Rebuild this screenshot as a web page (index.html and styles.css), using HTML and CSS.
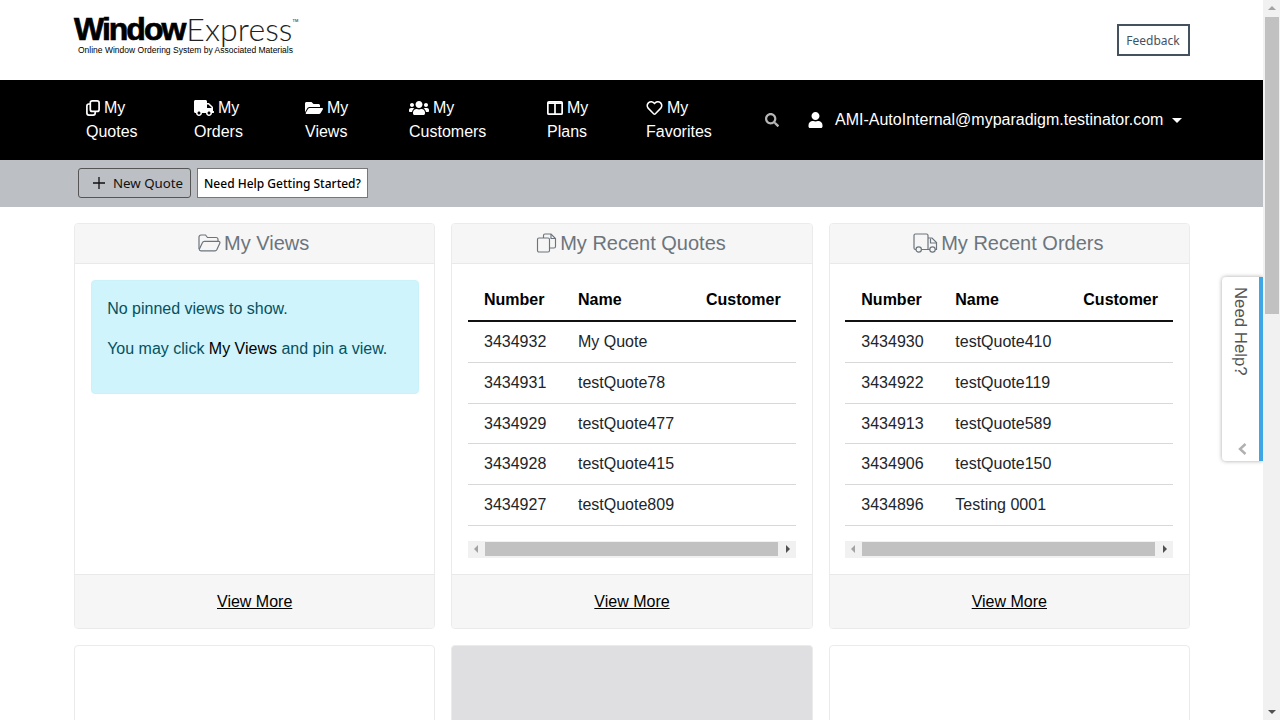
FILE: index.html
```html
<!DOCTYPE html>
<html lang="en">
<head>
    <meta charset="UTF-8">
    <title>WindowExpress</title>
    <link rel="stylesheet" href="styles.css">
</head>
<body>
<div class="app">
    <div class="page">
        <header class="top">
            <div class="wrap top-row">
                <a class="logo">
                    <span class="logo-name"><b>Window</b><span class="logo-thin">Express</span><sup>TM</sup></span>
                    <span class="logo-sub">Online Window Ordering System by Associated Materials</span>
                </a>
                <button class="feedback">Feedback</button>
            </div>
        </header>

        <nav class="nav">
            <div class="wrap nav-row">
                <div class="nav-links">
                    <a class="nav-link">
                        <span class="nav-first">
                            <svg class="ico" width="14" height="16" viewBox="0 0 14 16" fill="none" stroke="#fff" stroke-width="1.7"><rect x="4.300" y="0.900" width="8.800" height="10.500" rx="2"/><path d="M4.300 4H2.900A2 2 0 0 0 .9 6v7.100a2 2 0 0 0 2 2h4.300a2 2 0 0 0 2-2v-1.700"/></svg>
                            My
                        </span>
                        Quotes
                    </a>
                    <a class="nav-link">
                        <span class="nav-first">
                            <svg class="ico" width="20" height="16" viewBox="0 0 640 512" fill="#fff"><path d="M624 352h-16V243.900c0-12.700-5.100-24.900-14.100-33.900L494 110.100c-9-9-21.200-14.100-33.900-14.100H416V48c0-26.500-21.500-48-48-48H48C21.500 0 0 21.500 0 48v320c0 26.500 21.500 48 48 48h16c0 53 43 96 96 96s96-43 96-96h128c0 53 43 96 96 96s96-43 96-96h48c8.800 0 16-7.200 16-16v-32c0-8.800-7.200-16-16-16zM160 464c-26.500 0-48-21.500-48-48s21.500-48 48-48 48 21.500 48 48-21.500 48-48 48zm320 0c-26.500 0-48-21.500-48-48s21.500-48 48-48 48 21.500 48 48-21.500 48-48 48zm80-208H416V144h44.100l99.900 99.900V256z"/></svg>
                            My
                        </span>
                        Orders
                    </a>
                    <a class="nav-link">
                        <span class="nav-first">
                            <svg class="ico" width="18" height="16" viewBox="0 0 576 512" fill="#fff"><path d="M572.694 292.093L500.27 416.248A63.997 63.997 0 0 1 444.989 448H45.025c-18.523 0-30.064-20.093-20.731-36.093l72.424-124.155A64 64 0 0 1 152 256h399.964c18.523 0 30.064 20.093 20.73 36.093zM152 224h328v-48c0-26.51-21.49-48-48-48H272l-64-64H48C21.49 64 0 85.49 0 112v278.046l69.077-118.418C86.214 242.25 117.989 224 152 224z"/></svg>
                            My
                        </span>
                        Views
                    </a>
                    <a class="nav-link">
                        <span class="nav-first">
                            <svg class="ico" width="20" height="16" viewBox="0 0 640 512" fill="#fff"><path d="M96 224c35.300 0 64-28.700 64-64s-28.700-64-64-64-64 28.700-64 64 28.700 64 64 64zm448 0c35.300 0 64-28.700 64-64s-28.700-64-64-64-64 28.700-64 64 28.700 64 64 64zm32 32h-64c-17.600 0-33.500 7.100-45.100 18.600 40.300 22.100 68.900 62 75.100 109.400h66c17.700 0 32-14.300 32-32v-32c0-35.300-28.700-64-64-64zm-256 0c61.900 0 112-50.100 112-112S381.900 32 320 32 208 82.100 208 144s50.100 112 112 112zm76.800 32h-8.300c-20.800 10-43.900 16-68.500 16s-47.600-6-68.500-16h-8.300C179.600 288 128 339.600 128 403.200V432c0 26.500 21.500 48 48 48h288c26.500 0 48-21.500 48-48v-28.800c0-63.600-51.600-115.200-115.200-115.200zm-223.700-13.400C161.500 263.100 145.600 256 128 256H64c-35.300 0-64 28.700-64 64v32c0 17.700 14.300 32 32 32h65.900c6.300-47.400 34.900-87.300 75.200-109.400z"/></svg>
                            My
                        </span>
                        Customers
                    </a>
                    <a class="nav-link">
                        <span class="nav-first">
                            <svg class="ico" width="16" height="14" viewBox="0 0 16 14" fill="none" stroke="#fff" stroke-width="1.700"><rect x="0.850" y="0.850" width="14.300" height="12.300" rx="1"/><path d="M8 1v12M1 2.200h14"/></svg>
                            My
                        </span>
                        Plans
                    </a>
                    <a class="nav-link">
                        <span class="nav-first">
                            <svg class="ico" width="17" height="16" viewBox="0 0 512 512" fill="#fff"><path d="M458.400 64.300C400.600 15.700 311.300 23 256 79.300 200.700 23 111.400 15.600 53.600 64.300-21.600 127.600-10.600 230.800 43 285.500l175.400 178.700c10 10.200 23.400 15.900 37.600 15.900 14.300 0 27.600-5.600 37.600-15.800L469 285.600c53.500-54.700 64.700-157.900-10.600-221.300zm-23.600 187.500L259.400 430.500c-2.400 2.400-4.400 2.400-6.800 0L77.200 251.800c-36.500-37.200-43.900-107.600 7.300-150.700 38.900-32.700 98.900-27.800 136.500 10.500l35 35.700 35-35.700c37.800-38.500 97.800-43.200 136.500-10.600 51.100 43.100 43.500 113.900 7.300 150.800z"/></svg>
                            My
                        </span>
                        Favorites
                    </a>
                </div>
                <svg class="nav-search" width="14" height="14" viewBox="0 0 512 512" fill="#b5b5b5"><path d="M505 442.700L405.300 343c-4.500-4.500-10.600-7-17-7H372c27.600-35.300 44-79.700 44-128C416 93.100 322.900 0 208 0S0 93.100 0 208s93.100 208 208 208c48.300 0 92.700-16.400 128-44v16.300c0 6.400 2.500 12.500 7 17l99.700 99.700c9.400 9.400 24.600 9.400 33.900 0l28.300-28.300c9.400-9.400 9.400-24.600.1-34zM208 336c-70.700 0-128-57.200-128-128 0-70.700 57.200-128 128-128 70.700 0 128 57.200 128 128 0 70.700-57.200 128-128 128z"/></svg>
                <a class="nav-user">
                    <svg width="15" height="16" viewBox="0 0 448 512" fill="#fff"><path d="M224 256c70.700 0 128-57.300 128-128S294.700 0 224 0 96 57.300 96 128s57.300 128 128 128zm89.600 32h-16.700c-22.200 10.200-46.900 16-72.900 16s-50.600-5.800-72.900-16h-16.700C60.200 288 0 348.200 0 422.400V464c0 26.500 21.500 48 48 48h352c26.500 0 48-21.500 48-48v-41.600c0-74.200-60.200-134.400-134.400-134.400z"/></svg>
                    <span>AMI-AutoInternal@myparadigm.testinator.com</span>
                    <i class="caret"></i>
                </a>
            </div>
        </nav>

        <div class="toolbar">
            <div class="wrap toolbar-row">
                <button class="btn-new">
                    <svg width="12" height="12" viewBox="0 0 12 12" stroke="#111" stroke-width="1.300"><path d="M6 0v12M0 6h12"/></svg>
                    New Quote
                </button>
                <button class="btn-help">Need Help Getting Started?</button>
            </div>
        </div>

        <main class="wrap cards">
            <section class="card">
                <div class="card-head">
                    <svg width="23" height="18" viewBox="0 0 23 18" fill="none" stroke="#6c757d" stroke-width="1.200"><path d="M1 15V3a2 2 0 0 1 2-2h4.500l2 2.500H18a2 2 0 0 1 2 2V7"/><path d="M1.200 15.500 4.500 8.500A2 2 0 0 1 6.300 7.300H20.600a1.300 1.300 0 0 1 1.200 1.900l-3 6.500a2 2 0 0 1-1.800 1.100H3a1.900 1.900 0 0 1-1.800-1.800z"/></svg>
                    My Views
                </div>
                <div class="card-body">
                    <div class="alert">
                        <p>No pinned views to show.</p>
                        <p>You may click <a>My Views</a> and pin a view.</p>
                    </div>
                </div>
                <div class="card-foot"><a>View More</a></div>
            </section>

            <section class="card">
                <div class="card-head">
                    <svg width="21" height="20" viewBox="0 0 20 20" fill="none" stroke="#6c757d" stroke-width="1.150"><path d="M7 5V2.500A1.500 1.500 0 0 1 8.500 1h6L19 5.500v8a1.500 1.500 0 0 1-1.500 1.500H13"/><path d="M14.500 1v4.500H19"/><rect x="1" y="5" width="12" height="14" rx="1.500"/></svg>
                    My Recent Quotes
                </div>
                <div class="card-body">
                    <div class="table-scroll">
                        <table class="grid-table">
                            <thead><tr><th>Number</th><th>Name</th><th>Customer</th></tr></thead>
                            <tbody>
                                <tr><td>3434932</td><td>My Quote</td><td></td></tr>
                                <tr><td>3434931</td><td>testQuote78</td><td></td></tr>
                                <tr><td>3434929</td><td>testQuote477</td><td></td></tr>
                                <tr><td>3434928</td><td>testQuote415</td><td></td></tr>
                                <tr><td>3434927</td><td>testQuote809</td><td></td></tr>
                            </tbody>
                        </table>
                    </div>
                    <div class="hbar"><i class="arrow-left"></i><span class="hbar-thumb"></span><i class="arrow-right"></i></div>
                </div>
                <div class="card-foot"><a>View More</a></div>
            </section>

            <section class="card">
                <div class="card-head">
                    <svg width="25" height="20" viewBox="0 0 25 20" fill="none" stroke="#6c757d" stroke-width="1.200"><path d="M3 16.500H2.500A1.500 1.500 0 0 1 1 15V2.500A1.500 1.500 0 0 1 2.500 1h11A1.500 1.500 0 0 1 15 2.500V16.500H8.500"/><path d="M15 5h4l4.500 4.500V16.500H22M15 16.500h2"/><path d="M17.500 5.500V10h6"/><circle cx="5.700" cy="16.500" r="2.700"/><circle cx="19.500" cy="16.500" r="2.700"/></svg>
                    My Recent Orders
                </div>
                <div class="card-body">
                    <div class="table-scroll">
                        <table class="grid-table">
                            <thead><tr><th>Number</th><th>Name</th><th>Customer</th></tr></thead>
                            <tbody>
                                <tr><td>3434930</td><td>testQuote410</td><td></td></tr>
                                <tr><td>3434922</td><td>testQuote119</td><td></td></tr>
                                <tr><td>3434913</td><td>testQuote589</td><td></td></tr>
                                <tr><td>3434906</td><td>testQuote150</td><td></td></tr>
                                <tr><td>3434896</td><td>Testing 0001</td><td></td></tr>
                            </tbody>
                        </table>
                    </div>
                    <div class="hbar"><i class="arrow-left"></i><span class="hbar-thumb"></span><i class="arrow-right"></i></div>
                </div>
                <div class="card-foot"><a>View More</a></div>
            </section>

            <section class="card card-empty"></section>
            <section class="card card-empty card-gray"></section>
            <section class="card card-empty"></section>
        </main>

        <aside class="help-tab">
            <span class="help-label">Need Help?</span>
            <svg class="help-chevron" width="9" height="12" viewBox="0 0 9 12" fill="none" stroke="#b0b0b0" stroke-width="2.400"><path d="M7.500 1 2 6l5.500 5"/></svg>
        </aside>
    </div>

    <div class="vbar">
        <i class="arrow-up"></i>
        <span class="vbar-thumb"></span>
        <i class="arrow-down"></i>
    </div>
</div>
</body>
</html>
```

FILE: styles.css
```css
* {
    box-sizing: border-box;
}

html, body {
    margin: 0;
    height: 100%;
    overflow: hidden;
}

body {
    font-family: "Liberation Sans", Arial, sans-serif;
    font-size: 16px;
    line-height: 24px;
    color: #212529;
    background-color: #fff;
}

.app {
    display: flex;
    height: 720px;
}

.page {
    position: relative;
    flex: 1;
    min-width: 0;
    overflow: hidden;
}

.wrap {
    width: 1116px;
    margin-left: 74px;
}

/* header */
.top {
    height: 80px;
}

.top-row {
    display: flex;
    justify-content: space-between;
    align-items: flex-start;
}

.logo {
    display: flex;
    flex-direction: column;
    padding-top: 13px;
    color: #000;
}

.logo-name {
    font-size: 32px;
    line-height: 32px;
    white-space: nowrap;
    display: flex;
    align-items: flex-start;
}

.logo-name b {
    letter-spacing: -2px;
    -webkit-text-stroke: 0.7px #000;
}

.logo-thin {
    font-family: Lato, sans-serif;
    font-weight: 300;
    letter-spacing: 0.1px;
    margin-left: 2px;
    color: #222;
}

.logo-name sup {
    font-size: 4px;
    line-height: 4px;
    margin: 6px 0 0 0;
}

.logo-sub {
    font-size: 8.500px;
    line-height: 10px;
    margin: 0 0 0 4px;
    white-space: nowrap;
}

.feedback {
    margin-top: 24px;
    width: 73px;
    height: 32px;
    padding: 0 1px 0 0;
    font-family: "Noto Sans", sans-serif;
    font-size: 12px;
    color: #44525f;
    background-color: #fff;
    border: 2px solid #44525f;
}

/* nav */
.nav {
    height: 80px;
    background-color: #000;
    color: #fff;
}

.nav-row {
    display: flex;
    align-items: center;
    height: 80px;
    padding-left: 12px;
}

.nav-links {
    display: grid;
    grid-template-columns: 108px 111px 104px 138px 99px 119px;
}

.nav-link {
    display: block;
}

.nav-first {
    display: flex;
    align-items: center;
    gap: 4px;
}

.nav-user {
    display: flex;
    align-items: center;
    margin-left: 29px;
}

.nav-user span {
    margin-left: 12px;
    white-space: nowrap;
}

.caret {
    width: 0;
    height: 0;
    margin-left: 9px;
    border-left: 5px solid transparent;
    border-right: 5px solid transparent;
    border-top: 5px solid #fff;
}

/* toolbar */
.toolbar {
    height: 47px;
    background-color: #bcbfc4;
}

.toolbar-row {
    display: flex;
    gap: 6px;
    padding: 8px 0 0 4px;
}

.btn-new, .btn-help {
    height: 30px;
    padding: 0;
    font-family: "Noto Sans", sans-serif;
}

.btn-new {
    display: flex;
    align-items: center;
    justify-content: center;
    gap: 8px;
    width: 113px;
    padding-left: 7px;
    font-size: 13.300px;
    color: #111;
    background-color: #bcbfc4;
    border: 1px solid #555;
    border-radius: 3px;
}

.btn-help {
    width: 171px;
    font-size: 12px;
    font-weight: 500;
    color: #000;
    background-color: #fff;
    border: 1px solid #777;
}

/* cards */
.cards {
    display: grid;
    grid-template-columns: repeat(3, 1fr);
    gap: 16px;
    padding-top: 16px;
}

.card {
    display: flex;
    flex-direction: column;
    border: 1px solid #ebebeb;
    border-radius: 4px;
    overflow: hidden;
}

.card-head {
    display: flex;
    justify-content: center;
    align-items: center;
    gap: 3px;
    height: 40px;
    padding: 0 2px 2px 0;
    font-size: 20px;
    color: #6c757d;
    background-color: #f6f6f6;
    border-bottom: 1px solid #e9e9e9;
}

.card-body {
    flex: 1;
    padding: 16px 15.670px;
}

.card-foot {
    height: 54px;
    padding-top: 15px;
    text-align: center;
    color: #000;
    background-color: #f6f6f6;
    border-top: 1px solid #e9e9e9;
}

.card-foot a {
    text-decoration: underline;
}

.card-empty {
    height: 120px;
}

.card-gray {
    background-color: #dfdfe1;
}

.alert {
    padding: 16px 16px 16px 15.500px;
    color: #055160;
    background-color: #cff4fc;
    border: 1px solid #caf2fb;
    border-radius: 4px;
    min-height: 113px;
}

.alert p {
    margin: 0 0 16px;
}

.alert a {
    color: #000;
}

/* tables */
.table-scroll {
    overflow: hidden;
}

.grid-table {
    width: 329px;
    table-layout: fixed;
    border-collapse: collapse;
    color: #212529;
}

.grid-table th:nth-child(1), .grid-table td:nth-child(1) {
    width: 94px;
}

.grid-table th:nth-child(2), .grid-table td:nth-child(2) {
    width: 128px;
}

.grid-table th {
    height: 41px;
    padding: 8px 16px;
    text-align: left;
    color: #000;
    border-bottom: 2px solid #111;
    white-space: nowrap;
}

.grid-table td {
    height: 41px;
    padding: 0 16px;
    border-bottom: 1px solid #d8d8d8;
    white-space: nowrap;
}

.grid-table tr:nth-child(3) td {
    height: 40px;
    padding-top: 1px;
}

.hbar {
    display: flex;
    align-items: center;
    height: 17px;
    margin-top: 15px;
    background-color: #f1f1f1;
}

.hbar-thumb {
    width: 293px;
    height: 14px;
    margin-left: 7px;
    background-color: #c1c1c1;
}

.arrow-left, .arrow-right {
    width: 0;
    height: 0;
    border-top: 4px solid transparent;
    border-bottom: 4px solid transparent;
}

.arrow-left {
    margin-left: 6px;
    border-right: 4px solid #a3a3a3;
}

.arrow-right {
    margin-left: auto;
    margin-right: 6px;
    border-left: 4px solid #505050;
}

/* floating help tab */
.help-tab {
    position: absolute;
    top: 277px;
    right: 0;
    display: flex;
    flex-direction: column;
    align-items: center;
    justify-content: space-between;
    width: 41px;
    height: 184px;
    padding: 10px 2px 6px 0;
    background-color: #fff;
    border-right: 4px solid #3fa6e6;
    border-radius: 4px 0 0 4px;
    box-shadow: 0 0 4px rgba(0, 0, 0, 0.35);
}

.help-label {
    writing-mode: vertical-rl;
    font-size: 16.800px;
    line-height: 24px;
    color: #555;
}

.help-chevron {
    margin-left: 5px;
}

/* window scrollbar */
.vbar {
    display: flex;
    flex-direction: column;
    align-items: center;
    width: 17px;
    background-color: #f1f1f1;
}

.vbar-thumb {
    width: 14px;
    height: 297px;
    margin-top: 7px;
    background-color: #c1c1c1;
}

.arrow-up, .arrow-down {
    width: 0;
    height: 0;
    border-left: 4px solid transparent;
    border-right: 4px solid transparent;
}

.arrow-up {
    margin-top: 6px;
    border-bottom: 4px solid #a3a3a3;
}

.arrow-down {
    margin-top: auto;
    margin-bottom: 6px;
    border-top: 4px solid #505050;
}
```
